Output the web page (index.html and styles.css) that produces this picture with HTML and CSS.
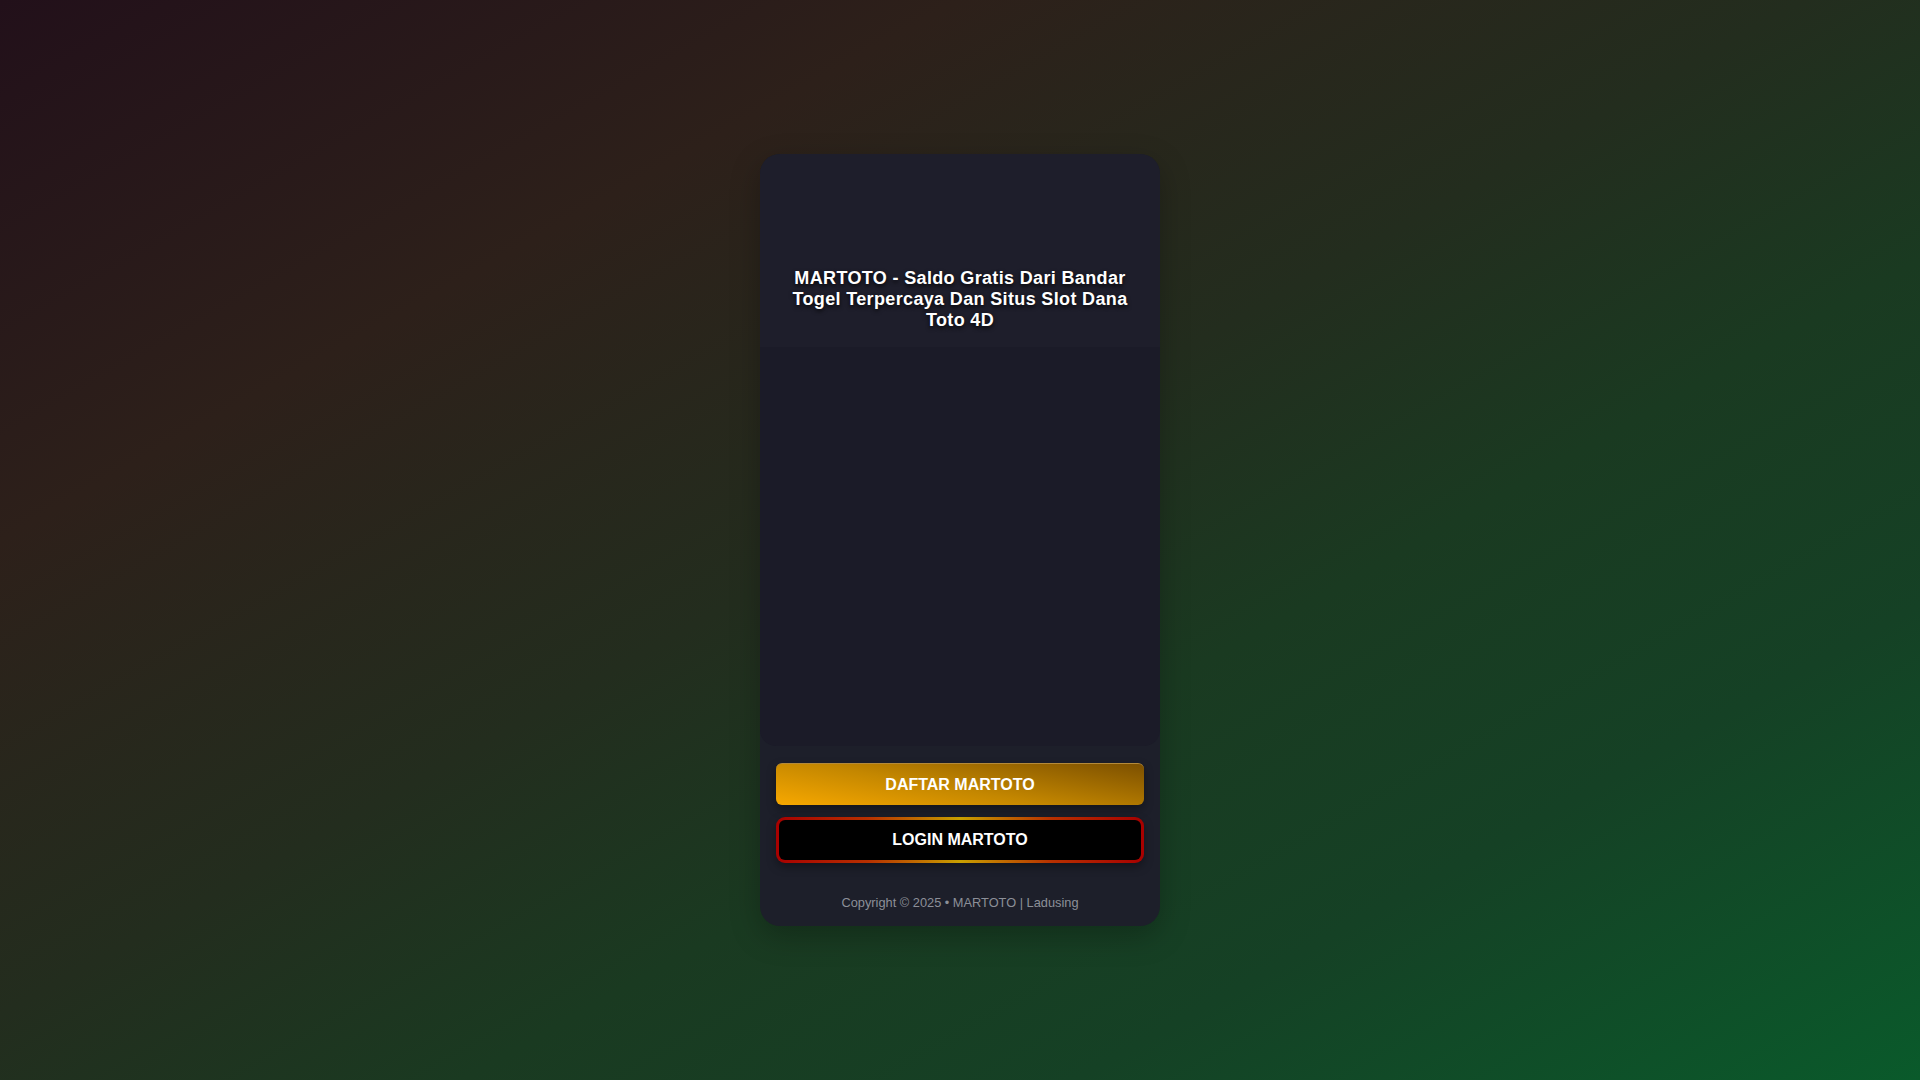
FILE: index.html
```html
<!DOCTYPE html>
<html lang="id">
<head>
<meta charset="utf-8">
<title>MARTOTO</title>
<link rel="stylesheet" href="styles.css">
</head>
<body>
<main class="card">
  <header class="card-head">
    <div class="logo"></div>
    <h1 class="title">MARTOTO - Saldo Gratis Dari Bandar Togel Terpercaya Dan Situs Slot Dana Toto 4D</h1>
  </header>
  <div class="banner"></div>
  <div class="card-foot">
    <a class="btn btn-daftar" href="#">DAFTAR MARTOTO</a>
    <a class="btn btn-login" href="#">LOGIN MARTOTO</a>
    <p class="copy">Copyright © 2025 • MARTOTO | Ladusing</p>
  </div>
</main>
</body>
</html>
```

FILE: styles.css
```css
* { box-sizing: border-box; }
html, body { height: 100%; }
body {
  margin: 0;
  min-height: 100vh;
  display: flex;
  align-items: center;
  justify-content: center;
  font-family: "Liberation Sans", Arial, sans-serif;
  background: linear-gradient(to bottom right, #22101a 0%, #2d201a 25%, #232d1e 47%, #1a3a21 62%, #154125 78%, #0a5a2b 100%);
  color: #fff;
}
.card {
  width: 400px;
  background: #1d1f2a;
  border-radius: 20px;
  overflow: hidden;
  box-shadow: 0 10px 30px rgba(0,0,0,0.25);
}
.card-head {
  background: #1e1e2b;
  padding: 22px 20px 16px;
  text-align: center;
}
.logo {
  height: 76px;
  margin-bottom: 16px;
}
.title {
  margin: 0;
  font-size: 18px;
  font-weight: 700;
  line-height: 21px;
  letter-spacing: 0.35px;
  text-shadow: 0 2px 4px rgba(0,0,0,0.85);
}
.banner {
  height: 399px;
  background: #1b1b28;
  border-radius: 0 0 16px 16px;
}
.card-foot {
  padding: 17px 16px 16px;
  display: flex;
  flex-direction: column;
  gap: 12px;
}
.btn {
  display: flex;
  align-items: center;
  justify-content: center;
  color: #fff;
  text-decoration: none;
  font-size: 16px;
  font-weight: 700;
  box-shadow: 0 4px 10px rgba(0,0,0,0.35);
}
.btn-daftar {
  height: 42px;
  border-radius: 6px;
  background: linear-gradient(10deg, #f7a800 0%, #c48700 45%, #7c5000 100%);
  border-top: 1px solid #b48a3a;
}
.btn-login {
  height: 46px;
  border-radius: 9px;
  border: 3px solid transparent;
  background:
    linear-gradient(#000, #000) padding-box,
    linear-gradient(90deg, #a80000 0%, #b83000 25%, #c8a000 50%, #b83000 75%, #a80000 100%) border-box;
}
.copy {
  margin: 20px 0 0;
  text-align: center;
  font-size: 12.8px;
  color: #8c8f98;
}
```
